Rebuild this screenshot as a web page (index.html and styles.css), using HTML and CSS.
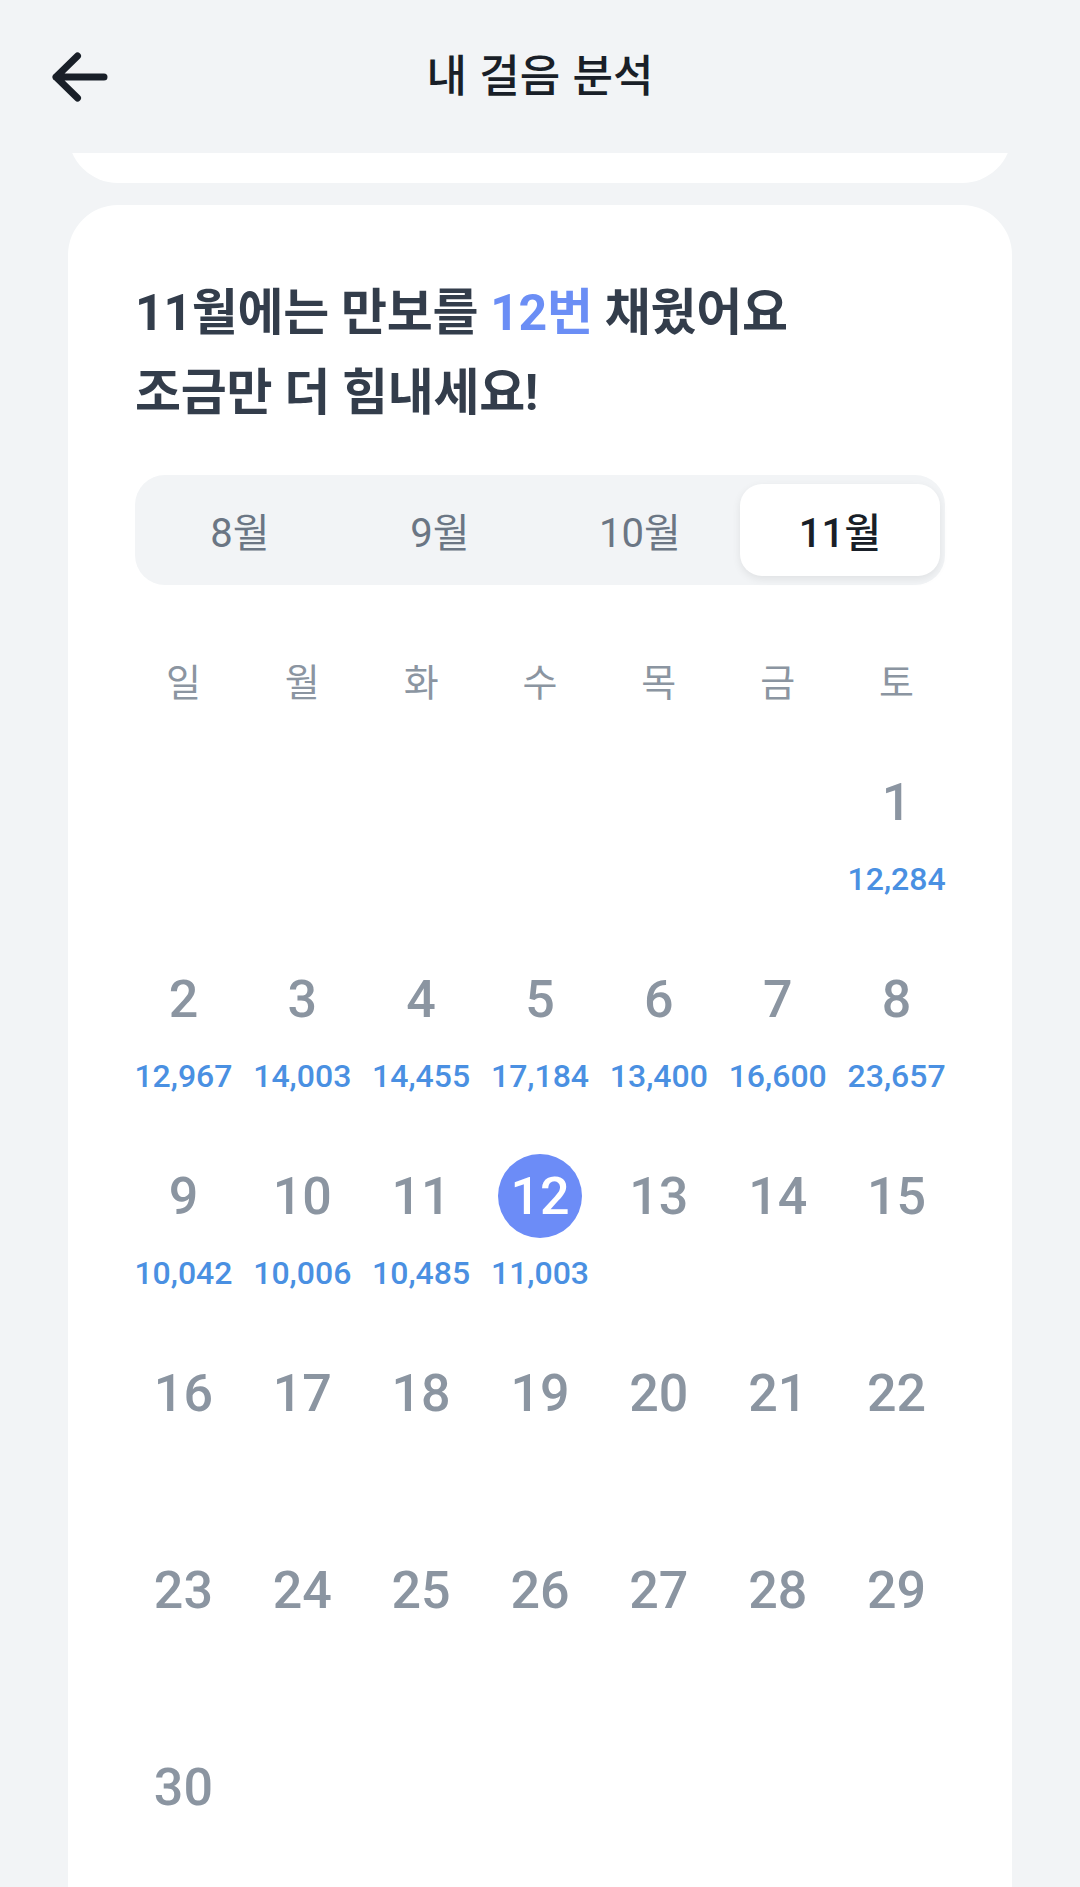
FILE: index.html
```html
<!DOCTYPE html>
<html lang="ko">
<head>
<meta charset="utf-8">
<title>내 걸음 분석</title>
<link rel="stylesheet" href="styles.css">
</head>
<body>
<header class="topbar">
  <div class="back">
    <svg class="back-icon" viewBox="0 0 56 50" width="56" height="50" aria-hidden="true">
      <path d="M4 25 H52 M25.5 4 L4 25 L25.5 46" fill="none" stroke="#191f28" stroke-width="7" stroke-linecap="round" stroke-linejoin="round"/>
    </svg>
  </div>
  <h1 class="title">내 걸음 분석</h1>
  <div></div>
</header>

<div class="peek"><div class="peek-card"></div></div>

<main class="card">
  <h2 class="headline">11월에는 만보를 <span class="accent">12번</span> 채웠어요<br>조금만 더 힘내세요!</h2>

  <div class="segment">
    <div class="seg-item">8월</div>
    <div class="seg-item">9월</div>
    <div class="seg-item">10월</div>
    <div class="seg-item active">11월</div>
  </div>

  <div class="weekdays">
    <div>일</div><div>월</div><div>화</div><div>수</div><div>목</div><div>금</div><div>토</div>
  </div>

  <div class="calendar">
    <div class="cell"></div><div class="cell"></div><div class="cell"></div><div class="cell"></div><div class="cell"></div><div class="cell"></div>
    <div class="cell"><div class="date">1</div><div class="steps">12,284</div></div>
    <div class="cell"><div class="date">2</div><div class="steps">12,967</div></div>
    <div class="cell"><div class="date">3</div><div class="steps">14,003</div></div>
    <div class="cell"><div class="date">4</div><div class="steps">14,455</div></div>
    <div class="cell"><div class="date">5</div><div class="steps">17,184</div></div>
    <div class="cell"><div class="date">6</div><div class="steps">13,400</div></div>
    <div class="cell"><div class="date">7</div><div class="steps">16,600</div></div>
    <div class="cell"><div class="date">8</div><div class="steps">23,657</div></div>
    <div class="cell"><div class="date">9</div><div class="steps">10,042</div></div>
    <div class="cell"><div class="date">10</div><div class="steps">10,006</div></div>
    <div class="cell"><div class="date">11</div><div class="steps">10,485</div></div>
    <div class="cell"><div class="date today">12</div><div class="steps">11,003</div></div>
    <div class="cell"><div class="date">13</div></div>
    <div class="cell"><div class="date">14</div></div>
    <div class="cell"><div class="date">15</div></div>
    <div class="cell"><div class="date">16</div></div>
    <div class="cell"><div class="date">17</div></div>
    <div class="cell"><div class="date">18</div></div>
    <div class="cell"><div class="date">19</div></div>
    <div class="cell"><div class="date">20</div></div>
    <div class="cell"><div class="date">21</div></div>
    <div class="cell"><div class="date">22</div></div>
    <div class="cell"><div class="date">23</div></div>
    <div class="cell"><div class="date">24</div></div>
    <div class="cell"><div class="date">25</div></div>
    <div class="cell"><div class="date">26</div></div>
    <div class="cell"><div class="date">27</div></div>
    <div class="cell"><div class="date">28</div></div>
    <div class="cell"><div class="date">29</div></div>
    <div class="cell"><div class="date">30</div></div>
  </div>
</main>
</body>
</html>
```

FILE: styles.css
```css
* { box-sizing: border-box; }

html, body {
  margin: 0;
  padding: 0;
  background: #f2f4f6;
  font-family: Roboto, "Noto Sans CJK KR", "Noto Sans", sans-serif;
  color: #191f28;
}

body {
  height: 1887px;
  overflow: hidden;
}

.topbar {
  height: 153px;
  display: grid;
  grid-template-columns: 1fr auto 1fr;
  align-items: center;
}

.back {
  padding-left: 52px;
  display: flex;
  align-items: center;
}

.back-icon { display: block; }

.title {
  margin: 0;
  padding-bottom: 7px;
  font-size: 44px;
  font-weight: 500;
  line-height: 60px;
  color: #191f28;
  font-family: "Noto Sans CJK KR", sans-serif;
}

.peek {
  margin: 0 68px;
  height: 30px;
  overflow: hidden;
}

.peek-card {
  height: 130px;
  margin-top: -100px;
  background: #fff;
  border-radius: 50px;
}

.card {
  margin: 22px 68px 0;
  background: #fff;
  border-radius: 50px 50px 0 0;
  padding: 68px 56px 200px;
}

.headline {
  margin: 0 11px;
  font-size: 50px;
  font-weight: 700;
  line-height: 80px;
  color: #333d4b;
  letter-spacing: -0.3px;
}

.accent { color: #6b8ef5; }

.segment {
  margin: 42px 11px 0;
  height: 110px;
  padding: 9px 5px;
  background: #f2f4f6;
  border-radius: 30px;
  display: grid;
  grid-template-columns: repeat(4, 1fr);
}

.seg-item {
  display: flex;
  align-items: center;
  justify-content: center;
  font-size: 40px;
  font-weight: 400;
  color: #6b7684;
  border-radius: 22px;
}

.seg-item.active {
  background: #fff;
  color: #191f28;
  font-weight: 500;
  box-shadow: 0 3px 8px rgba(0, 0, 0, 0.08);
}

.weekdays {
  margin-top: 70px;
  display: grid;
  grid-template-columns: repeat(7, 1fr);
  text-align: center;
  font-family: "Noto Sans CJK KR", sans-serif;
  font-size: 38px;
  line-height: 50px;
  color: #8b95a1;
}

.calendar {
  margin-top: 55px;
  display: grid;
  grid-template-columns: repeat(7, 1fr);
  grid-auto-rows: 197px;
}

.cell {
  display: flex;
  flex-direction: column;
  align-items: center;
}

.date {
  width: 84px;
  height: 84px;
  border-radius: 50%;
  display: flex;
  align-items: center;
  justify-content: center;
  font-size: 52px;
  font-weight: 500;
  color: #8b95a1;
}

.date.today {
  background: #6c8cf7;
  color: #fff;
}

.steps {
  margin-top: 17px;
  line-height: 36px;
  font-size: 32px;
  font-weight: 500;
  color: #4a90e2;
  white-space: nowrap;
}
```
